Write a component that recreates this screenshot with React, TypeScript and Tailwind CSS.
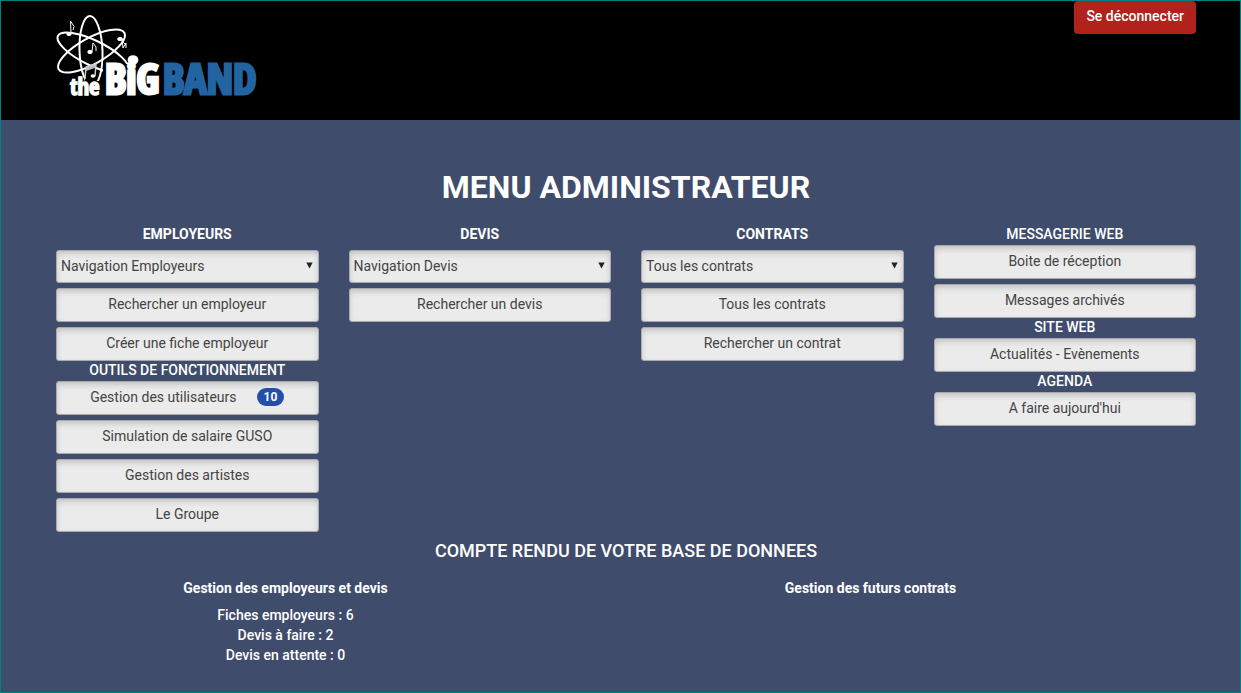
import type { ReactNode } from "react";

const control =
  "w-full rounded-[3px] border border-[#aaaaaa] bg-[#ebebeb] text-sm text-[#444444] shadow-[inset_0_3px_6px_-1px_rgba(0,0,0,0.2)]";

function MenuLink({ children }: { children: ReactNode }) {
  return (
    <a
      href="#"
      className={`${control} flex h-[34px] items-center justify-center pb-[2px]`}
    >
      {children}
    </a>
  );
}

function MenuSelect({ label, option }: { label: string; option: string }) {
  return (
    <div className="relative">
      <select
        aria-label={label}
        className={`${control} block h-[33px] appearance-none pl-1 pr-6 pb-[2px]`}
      >
        <option>{option}</option>
      </select>
      <svg
        viewBox="0 0 7 7"
        className="pointer-events-none absolute right-[6px] top-[12px] size-[7px]"
        aria-hidden="true"
      >
        <path d="M0.3 0.5H6.7L3.5 6.6Z" fill="#222222" />
      </svg>
    </div>
  );
}

function Group({ title, children }: { title: string; children: ReactNode }) {
  return (
    <section>
      <h3 className="pb-[2px] text-center text-sm leading-[18px] font-medium">{title}</h3>
      <div className="flex flex-col gap-[5px]">{children}</div>
    </section>
  );
}

function MainGroup({ title, children }: { title: string; children: ReactNode }) {
  return (
    <section>
      <h2 className="pb-[7px] text-center text-sm leading-[18px] font-bold">{title}</h2>
      <div className="flex flex-col gap-[5px]">{children}</div>
    </section>
  );
}

function Logo() {
  return (
    <svg viewBox="0 0 210 100" className="h-[100px] w-[210px]" role="img" aria-label="the BiG BAND">
      <g fill="none" stroke="#ffffff" strokeWidth="2">
        <ellipse cx="36" cy="37" rx="11.5" ry="35" transform="rotate(-2 36 37)" />
        <ellipse cx="38" cy="39" rx="39" ry="12.5" transform="rotate(26 38 39)" />
        <ellipse cx="36.500" cy="37" rx="37.500" ry="13" transform="rotate(-29 36.5 37)" />
      </g>
      <g fill="#ffffff" stroke="#ffffff" strokeWidth="1">
        <ellipse cx="14" cy="20" rx="2.2" ry="1.6" />
        <path d="M16 19L15.5 7L19 12.5L18 16" fill="none" />
        <ellipse cx="35" cy="38" rx="2.2" ry="1.7" />
        <path d="M37 37.5L38 29L41 33V37" fill="none" />
        <ellipse cx="65" cy="25" rx="2.4" ry="1.6" />
        <path d="M67 25L68 34L71 29V34M68 28L71 31" fill="none" />
      </g>
      <path d="M31 54L41 51L40 67H30Z" fill="#000000" />
      <path d="M15 71H24V67H45V84H15ZM48 47H62V60H71V50H86V84H48Z" fill="#000000" />
      <path d="M31 53L41 50L40 54L31 57Z" fill="#bbbbbb" />
      <path d="M30 65L31 53L41 50L40 62" fill="none" stroke="#d0d0d0" strokeWidth="1.5" />
      <ellipse cx="38" cy="62" rx="2.4" ry="1.8" fill="#ffffff" />
      <g
        fontFamily="'Open Sans Condensed', 'Roboto Condensed', 'Liberation Sans', sans-serif"
        fontWeight="700"
      >
        <text x="15" y="81" fontSize="23" fill="#ffffff" stroke="#ffffff" strokeWidth="1.4">the</text>
        <text x="50" y="80" fontSize="42" fill="#ffffff" stroke="#ffffff" strokeWidth="3">BiG</text>
        <text x="108" y="80" fontSize="42" fill="#2264a2" stroke="#2264a2" strokeWidth="3">BAND</text>
      </g>
      <ellipse cx="78" cy="46" rx="5.4" ry="4.8" fill="#ffffff" />
    </svg>
  );
}

export default function App() {
  return (
    <div className="min-h-screen border border-[#008080] bg-[#404c6b] font-[Roboto,sans-serif] text-white">
      <header className="flex h-[119px] items-start justify-between bg-black pr-[44px] pl-[54px]">
        <a href="#" className="mt-[13px]">
          <Logo />
        </a>
        <button
          type="button"
          className="h-[33px] rounded-[4px] bg-[#b1221c] px-3 pb-[3px] text-sm font-medium"
        >
          Se déconnecter
        </button>
      </header>

      <main className="pr-[44px] pb-6 pl-[55px]">
        <h1 className="pt-[47px] text-center text-[32px] leading-10 font-bold">
          MENU ADMINISTRATEUR
        </h1>

        <div className="mt-[18px] grid grid-cols-4 gap-[30px]">
          <div>
            <MainGroup title="EMPLOYEURS">
              <MenuSelect label="Employeurs" option="Navigation Employeurs" />
              <MenuLink>Rechercher un employeur</MenuLink>
              <MenuLink>Créer une fiche employeur</MenuLink>
            </MainGroup>
            <Group title="OUTILS DE FONCTIONNEMENT">
              <MenuLink>
                Gestion des utilisateurs
                <span className="ml-5 rounded-full bg-[#234fa8] px-[7px] text-xs leading-[18px] font-bold text-white">
                  10
                </span>
              </MenuLink>
              <MenuLink>Simulation de salaire GUSO</MenuLink>
              <MenuLink>Gestion des artistes</MenuLink>
              <MenuLink>Le Groupe</MenuLink>
            </Group>
          </div>
          <MainGroup title="DEVIS">
            <MenuSelect label="Devis" option="Navigation Devis" />
            <MenuLink>Rechercher un devis</MenuLink>
          </MainGroup>
          <MainGroup title="CONTRATS">
            <MenuSelect label="Contrats" option="Tous les contrats" />
            <MenuLink>Tous les contrats</MenuLink>
            <MenuLink>Rechercher un contrat</MenuLink>
          </MainGroup>
          <div>
            <Group title="MESSAGERIE WEB">
              <MenuLink>Boite de réception</MenuLink>
              <MenuLink>Messages archivés</MenuLink>
            </Group>
            <Group title="SITE WEB">
              <MenuLink>Actualités - Evènements</MenuLink>
            </Group>
            <Group title="AGENDA">
              <MenuLink>A faire aujourd'hui</MenuLink>
            </Group>
          </div>
        </div>

        <h2 className="mt-[9px] text-center text-lg leading-5 font-medium">
          COMPTE RENDU DE VOTRE BASE DE DONNEES
        </h2>
        <div className="mt-[17px] grid grid-cols-2 gap-[30px] text-center text-sm leading-5">
          <section className="pr-24">
            <h3 className="mb-[7px] font-bold">Gestion des employeurs et devis</h3>
            <ul className="font-medium">
              <li>Fiches employeurs : 6</li>
              <li>Devis à faire : 2</li>
              <li>Devis en attente : 0</li>
            </ul>
          </section>
          <section className="pr-24">
            <h3 className="font-bold">Gestion des futurs contrats</h3>
          </section>
        </div>
      </main>
    </div>
  );
}
